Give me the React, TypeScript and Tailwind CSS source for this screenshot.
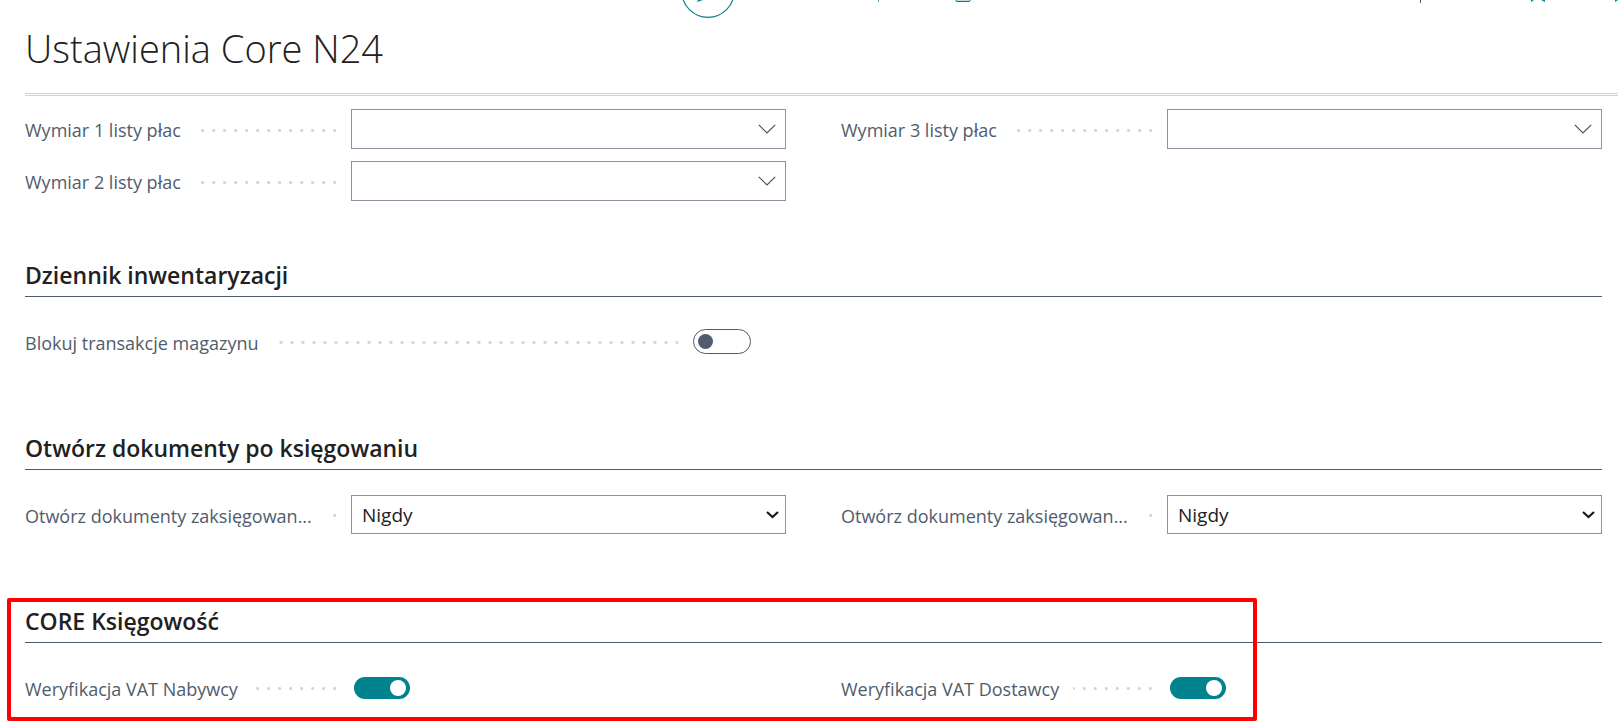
import { useId, useState } from 'react';
import type { ReactNode } from 'react';

function Dots() {
  return (
    <span
      aria-hidden="true"
      className="ml-[14px] mr-[15px] h-[3px] min-w-0 flex-1 bg-[radial-gradient(circle_at_center,#d2d2d5_1px,transparent_2px)] bg-[length:11px_3px] bg-[position:right_-4px_top] bg-repeat-x"
    />
  );
}

function FieldLabel({ id, text, wide }: { id: string; text: string; wide?: boolean }) {
  return (
    <div className={`flex shrink-0 items-center pt-0.5 ${wide ? 'w-[668px]' : 'w-[326px]'}`}>
      <label htmlFor={id} className="whitespace-nowrap text-[18px] leading-[26px] text-[#505c6d]">
        {text}
      </label>
      <Dots />
    </div>
  );
}

function LookupField({ label }: { label: string }) {
  const id = useId();
  return (
    <div className="flex items-center">
      <FieldLabel id={id} text={label} />
      <div className="flex h-10 min-w-0 flex-1 items-center border border-[#8b939e]">
        <input id={id} type="text" className="h-full min-w-0 flex-1 px-[10px] text-[18px] text-[#212121] outline-none" />
        <button type="button" aria-label={`Wybierz: ${label}`} className="flex h-full w-9 items-center justify-center">
          <svg width="18" height="10" viewBox="0 0 18 10" fill="none" stroke="#505050" strokeWidth="1.2">
            <path d="M.8.8 9 9 17.2.8" />
          </svg>
        </button>
      </div>
    </div>
  );
}

function SelectField({ label }: { label: string }) {
  const id = useId();
  return (
    <div className="flex items-center">
      <FieldLabel id={id} text={label} />
      <div className="relative h-[39px] min-w-0 flex-1">
        <select
          id={id}
          defaultValue="Nigdy"
          className="h-full w-full appearance-none border border-[#8b939e] bg-white px-[10px] pt-0.5 text-[19px] text-[#212121] outline-none"
        >
          <option>Nigdy</option>
          <option>Zawsze</option>
        </select>
        <svg
          className="pointer-events-none absolute right-[7px] top-4"
          width="13"
          height="8"
          viewBox="0 0 13 8"
          fill="none"
          stroke="#1b1b1b"
          strokeWidth="2.2"
        >
          <path d="M1 1l5.5 5L12 1" />
        </svg>
      </div>
    </div>
  );
}

function ToggleField({ label, initial, wide }: { label: string; initial: boolean; wide?: boolean }) {
  const id = useId();
  const [on, setOn] = useState(initial);
  return (
    <div className="flex h-[39px] items-center">
      <FieldLabel id={id} text={label} wide={wide} />
      <button
        id={id}
        type="button"
        role="switch"
        aria-checked={on}
        onClick={() => setOn(!on)}
        className={
          on
            ? 'ml-[3px] flex h-[22px] w-14 items-center justify-end rounded-full bg-[#00838f] px-1'
            : 'flex h-[25px] w-[58px] items-center rounded-full border border-[#505c6d] px-1'
        }
      >
        <span className={on ? 'size-4 rounded-full bg-white' : 'size-[15px] rounded-full bg-[#505c6d]'} />
      </button>
    </div>
  );
}

function Section({ title, children }: { title: string; children: ReactNode }) {
  return (
    <section>
      <h2 className="border-b border-[#505c6d] pb-[5px] text-[23px] font-semibold leading-[31px] text-[#212121]">{title}</h2>
      <div className="mt-[25px] grid grid-cols-2 gap-x-[55px] gap-y-3">{children}</div>
    </section>
  );
}

// Lower edge of the action bar, scrolled under the top of the window
function ActionBar() {
  return (
    <div className="flex h-[18px] items-start overflow-hidden pl-[656px] text-[#00838f]">
      <button type="button" aria-label="Edytuj" className="h-[18px] w-[54px] shrink-0">
        <svg width="54" height="18" viewBox="0 0 54 18" fill="none" stroke="currentColor">
          <circle cx="27" cy="-9" r="26.3" strokeWidth="1.2" />
          <path d="M16 2 17 0h5z" fill="currentColor" stroke="none" />
        </svg>
      </button>
      <svg className="ml-[143px] shrink-0" width="2" height="2" viewBox="0 0 2 2">
        <path d="M0 0h1v2H0z" fill="currentColor" opacity=".7" />
      </svg>
      <button type="button" aria-label="Usuń" className="ml-[75px] shrink-0">
        <svg width="16" height="3" viewBox="0 0 16 3" fill="none" stroke="currentColor">
          <path d="M1 0v.5q0 1 1 1h12q1 0 1-1V0" fill="#b8dcdf" />
        </svg>
      </button>
      <div className="flex-1" />
      <svg className="shrink-0 text-[#505c6d]" width="2" height="3" viewBox="0 0 2 3">
        <path d="M0 0h1v3H0z" fill="currentColor" />
      </svg>
      <button type="button" aria-label="Zakładka" className="ml-[108px] shrink-0">
        <svg width="16" height="3" viewBox="0 0 16 3" fill="currentColor">
          <path d="M1 0h3L1 2zM11 0h4v2z" />
        </svg>
      </button>
      <svg className="ml-[69px] shrink-0" width="3" height="2" viewBox="0 0 3 2" fill="currentColor">
        <path d="M0 0h3L0 2z" />
      </svg>
    </div>
  );
}

export default function App() {
  return (
    <div className="overflow-hidden bg-white pb-6 pl-[25px] font-['Open_Sans','Noto_Sans',sans-serif]">
      <ActionBar />
      <h1 className="mt-[3px] text-[38px] font-light leading-[54px] text-[#212121]">Ustawienia Core N24</h1>
      <div className="mt-[18px] h-[3px] border-y border-[#d2d2d8]" />

      <main className="pr-4">
        <div className="mt-[13px] grid grid-cols-2 gap-x-[55px] gap-y-3">
          <LookupField label="Wymiar 1 listy płac" />
          <LookupField label="Wymiar 3 listy płac" />
          <LookupField label="Wymiar 2 listy płac" />
        </div>

        <div className="mt-[59px]">
          <Section title="Dziennik inwentaryzacji">
            <div className="col-span-2">
              <ToggleField label="Blokuj transakcje magazynu" initial={false} wide />
            </div>
          </Section>
        </div>

        <div className="mt-[72px]">
          <Section title="Otwórz dokumenty po księgowaniu">
            <SelectField label="Otwórz dokumenty zaksięgowan..." />
            <SelectField label="Otwórz dokumenty zaksięgowan..." />
          </Section>
        </div>

        <div className="relative mt-[72px]">
          <Section title="CORE Księgowość">
            <ToggleField label="Weryfikacja VAT Nabywcy" initial />
            <ToggleField label="Weryfikacja VAT Dostawcy" initial />
          </Section>
          <div className="pointer-events-none absolute -bottom-[14px] -left-[18px] -top-2 right-[345px] rounded-[2px] border-4 border-[#ff0000]" />
        </div>
      </main>
    </div>
  );
}
